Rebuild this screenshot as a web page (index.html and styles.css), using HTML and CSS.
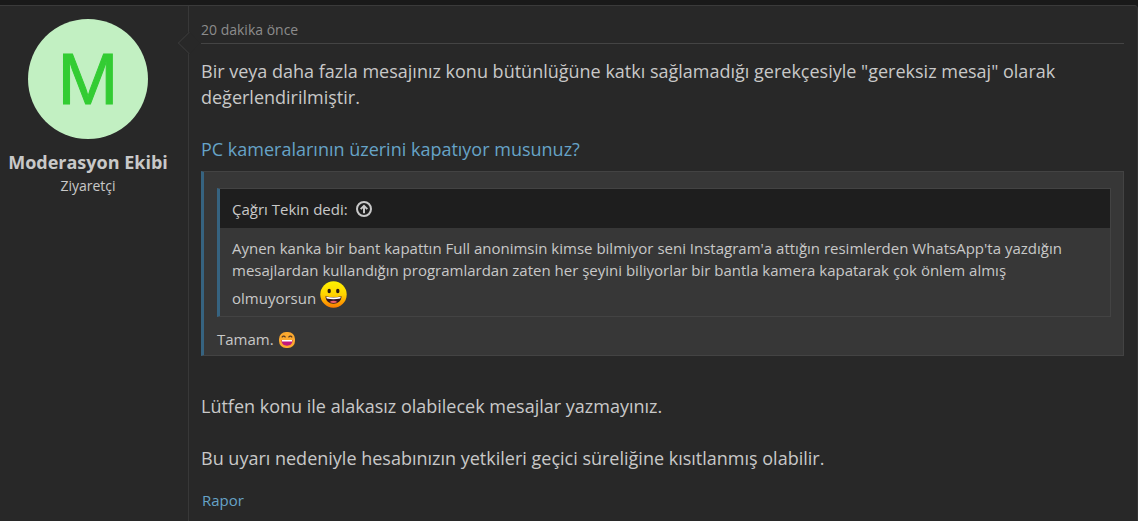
FILE: index.html
```html
<!DOCTYPE html>
<html lang="tr">
<head>
    <meta charset="UTF-8">
    <meta name="viewport" content="width=device-width, initial-scale=1.0">
    <title>Moderasyon Ekibi</title>
    <link rel="stylesheet" href="styles.css">
</head>
<body>
    <article class="message">
        <aside class="message-user">
            <div class="avatar">M</div>
            <h4 class="user-name">Moderasyon Ekibi</h4>
            <div class="user-title">Ziyaretçi</div>
            <span class="message-arrow"></span>
        </aside>

        <div class="message-main">
            <header class="message-date"><time>20 dakika önce</time></header>

            <div class="message-body">
                <p>Bir veya daha fazla mesajınız konu bütünlüğüne katkı sağlamadığı gerekçesiyle "gereksiz mesaj" olarak değerlendirilmiştir.</p>
                <p><a href="#">PC kameralarının üzerini kapatıyor musunuz?</a></p>

                <blockquote class="quote quote-outer">
                    <blockquote class="quote quote-inner">
                        <div class="quote-title">
                            <span>Çağrı Tekin dedi:</span>
                            <svg class="quote-icon" viewBox="0 0 16 16" fill="none" stroke="#c8c8c8" stroke-width="2">
                                <circle cx="8" cy="8" r="7"/>
                                <path d="M8 12.2V5M4.7 8.1L8 4.8l3.3 3.3"/>
                            </svg>
                        </div>
                        <div class="quote-content">
                            Aynen kanka bir bant kapattın Full anonimsin kimse bilmiyor seni Instagram'a attığın resimlerden WhatsApp'ta yazdığın mesajlardan kullandığın programlardan zaten her şeyini biliyorlar bir bantla kamera kapatarak çok önlem almış olmuyorsun
                            <svg class="smilie-large" viewBox="0 0 27 27">
                                <defs>
                                    <linearGradient id="face" x1="0" y1="0" x2="0" y2="1">
                                        <stop offset="0" stop-color="#fff200"/>
                                        <stop offset="0.5" stop-color="#ffd400"/>
                                        <stop offset="1" stop-color="#fb7a00"/>
                                    </linearGradient>
                                </defs>
                                <circle cx="13.5" cy="13.5" r="13.2" fill="url(#face)"/>
                                <ellipse cx="9.2" cy="10" rx="1.7" ry="2.3" fill="#2b1a10"/>
                                <ellipse cx="17.8" cy="10" rx="1.7" ry="2.3" fill="#2b1a10"/>
                                <path d="M5.5 15.3Q13.5 17 21.5 15.3C21.3 20 18 22.7 13.5 22.7S5.7 20 5.5 15.3Z" fill="#32141c"/>
                                <path d="M6.2 15.8Q13.5 17.2 20.8 15.8L20.3 17.6Q13.5 19 6.7 17.6Z" fill="#fff"/>
                                <path d="M9.5 21Q13.5 18.6 17.5 21Q13.5 23.2 9.5 21Z" fill="#f0606c"/>
                            </svg>
                        </div>
                    </blockquote>
                    <div class="quote-reply">
                        Tamam.
                        <svg class="smilie" viewBox="0 0 18 18">
                            <rect x="1" y="1" width="16" height="16" rx="7" fill="#fca92f"/>
                            <path d="M3.8 6.3Q5.7 4 7.5 6.3M10.5 6.3Q12.3 4 14.2 6.3" fill="none" stroke="#593a24" stroke-width="1.2"/>
                            <path d="M3.5 9H14.5C14.5 13 12.3 14.7 9 14.7S3.5 13 3.5 9Z" fill="#c2187c"/>
                            <path d="M4 9H14V10.5H4Z" fill="#fff"/>
                        </svg>
                    </div>
                </blockquote>

                <p>Lütfen konu ile alakasız olabilecek mesajlar yazmayınız.</p>
                <p>Bu uyarı nedeniyle hesabınızın yetkileri geçici süreliğine kısıtlanmış olabilir.</p>
            </div>

            <footer class="message-footer"><a href="#">Rapor</a></footer>
        </div>
    </article>
</body>
</html>
```

FILE: styles.css
```css
* {
    box-sizing: border-box;
}

body {
    margin: 0;
    padding-top: 5px;
    background-color: #191919;
    color: #c8c8c8;
    font-family: "Open Sans", "Noto Sans", sans-serif;
    font-size: 15px;
    line-height: 22px;
}

a {
    color: #66a3c7;
    text-decoration: none;
}

a:hover {
    text-decoration: underline;
}

.message {
    display: flex;
    min-height: calc(100vh - 5px);
    background-color: #282828;
    border-top: 1px solid #3a3a3a;
    border-right: 1px solid #333;
    border-top-right-radius: 4px;
}

/* user column */
.message-user {
    position: relative;
    flex: 0 0 189px;
    padding: 13px 12px 0 0;
    border-right: 1px solid #383838;
    text-align: center;
}

.avatar {
    width: 120px;
    height: 120px;
    margin: 0 auto 11px;
    border-radius: 50%;
    background-color: #c2f0c2;
    color: #33cc33;
    font-family: "Liberation Sans", Arial, sans-serif;
    font-size: 73px;
    line-height: 120px;
    -webkit-text-stroke: 1px #33cc33;
}

.user-name {
    margin: 0 0 1px;
    font-size: 18px;
    font-weight: 700;
    line-height: 24px;
    white-space: nowrap;
}

.user-title {
    font-size: 14px;
}

.message-arrow {
    position: absolute;
    top: 29px;
    right: -9px;
    width: 16px;
    height: 16px;
    background-color: #282828;
    border-left: 1px solid #383838;
    border-bottom: 1px solid #383838;
    transform: rotate(45deg);
}

/* post column */
.message-main {
    flex: 1;
    min-width: 0;
    padding: 13px 13px 0 12px;
}

.message-date {
    padding-bottom: 2px;
    border-bottom: 1px solid #444;
    color: #8c8c8c;
    font-size: 14px;
}

.message-body {
    padding-top: 14px;
    font-size: 18px;
    line-height: 26px;
}

.message-body p {
    margin: 0 0 26px;
}

.quote {
    margin: 0;
    background-color: #373737;
    border: 1px solid #434343;
    border-left: 3px solid #366380;
    font-size: 15px;
    line-height: 22px;
}

.quote-outer {
    margin: -17px 0 37px;
    padding: 16px 12px 5px 13px;
}

.quote-title {
    display: flex;
    align-items: center;
    gap: 8px;
    padding: 9px 12px 8px;
    background-color: #1e1e1e;
}

.quote-icon {
    width: 16px;
    height: 16px;
}

.quote-content {
    padding: 9px 24px 7px 12px;
}

.smilie-large {
    width: 27px;
    height: 27px;
    vertical-align: -4px;
}

.quote-reply {
    padding-top: 11px;
}

.smilie {
    width: 18px;
    height: 18px;
    vertical-align: -4px;
}

.message-footer {
    padding: 0 1px 8px;
    margin-top: -8px;
}
```
